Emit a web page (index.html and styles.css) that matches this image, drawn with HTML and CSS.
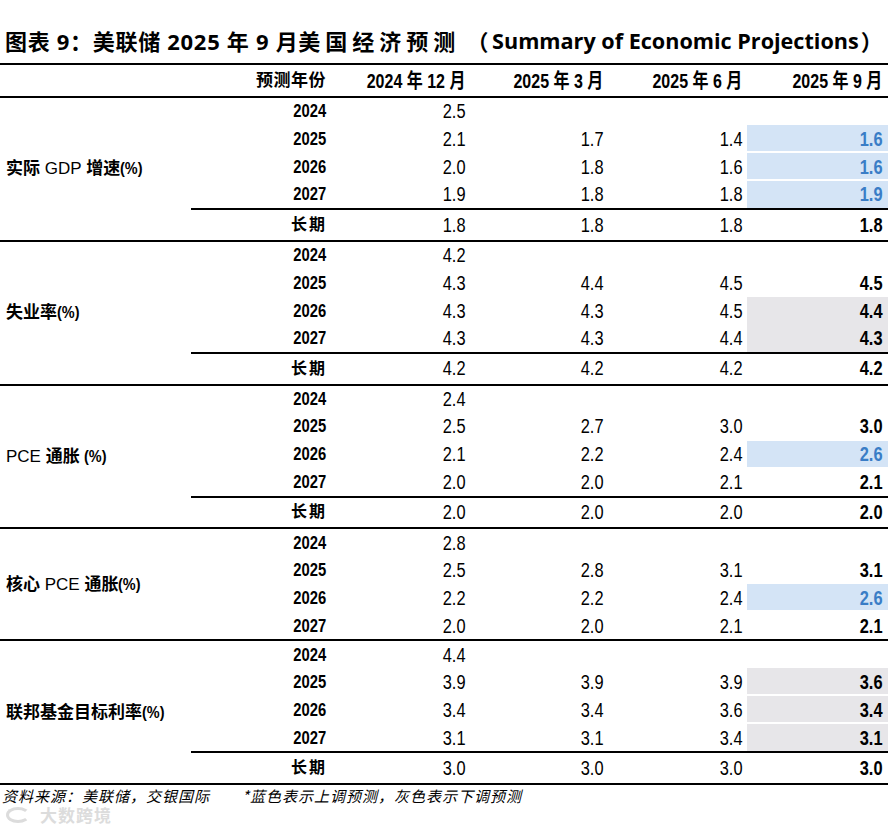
FILE: index.html
```html
<!DOCTYPE html>
<html lang="zh-CN">
<head>
<meta charset="utf-8">
<title>美联储 2025 年 9 月美国经济预测</title>
<link rel="stylesheet" href="styles.css">
</head>
<body>
<div class="page">
  <h1 class="title">图表 9：美联储 2025 年 9 月<span class="wide">美国经济预测</span><span class="paren">（</span><span class="en">Summary of Economic Projections</span><span class="paren-r">）</span></h1>
  <table class="sep">
    <colgroup>
      <col class="c-label"><col class="c-year"><col class="c-v1"><col class="c-v2"><col class="c-v3"><col class="c-v4">
    </colgroup>
    <thead>
      <tr>
        <th class="label"></th>
        <th class="yr-h">预测年份</th>
        <th class="v"><span class="n">2024 年 12 月</span></th>
        <th class="v"><span class="n">2025 年 3 月</span></th>
        <th class="v"><span class="n">2025 年 6 月</span></th>
        <th class="v last"><span class="n">2025 年 9 月</span></th>
      </tr>
    </thead>
    <tbody class="sec">
      <tr><td class="label" rowspan="5">实际 <span class="lat">GDP</span> 增速<span class="pct">(%)</span></td><td class="yr"><span class="n">2024</span></td><td class="v"><span class="n">2.5</span></td><td class="v"></td><td class="v"></td><td class="v last"></td></tr>
      <tr><td class="yr"><span class="n">2025</span></td><td class="v"><span class="n">2.1</span></td><td class="v"><span class="n">1.7</span></td><td class="v"><span class="n">1.4</span></td><td class="v last up gap"><span class="n">1.6</span></td></tr>
      <tr><td class="yr"><span class="n">2026</span></td><td class="v"><span class="n">2.0</span></td><td class="v"><span class="n">1.8</span></td><td class="v"><span class="n">1.6</span></td><td class="v last up gap"><span class="n">1.6</span></td></tr>
      <tr><td class="yr"><span class="n">2027</span></td><td class="v"><span class="n">1.9</span></td><td class="v"><span class="n">1.8</span></td><td class="v"><span class="n">1.8</span></td><td class="v last up"><span class="n">1.9</span></td></tr>
      <tr class="long"><td class="yr cjk">长期</td><td class="v"><span class="n">1.8</span></td><td class="v"><span class="n">1.8</span></td><td class="v"><span class="n">1.8</span></td><td class="v last"><span class="n">1.8</span></td></tr>
    </tbody>
    <tbody class="sec">
      <tr><td class="label" rowspan="5">失业率<span class="pct">(%)</span></td><td class="yr"><span class="n">2024</span></td><td class="v"><span class="n">4.2</span></td><td class="v"></td><td class="v"></td><td class="v last"></td></tr>
      <tr><td class="yr"><span class="n">2025</span></td><td class="v"><span class="n">4.3</span></td><td class="v"><span class="n">4.4</span></td><td class="v"><span class="n">4.5</span></td><td class="v last"><span class="n">4.5</span></td></tr>
      <tr><td class="yr"><span class="n">2026</span></td><td class="v"><span class="n">4.3</span></td><td class="v"><span class="n">4.3</span></td><td class="v"><span class="n">4.5</span></td><td class="v last down"><span class="n">4.4</span></td></tr>
      <tr><td class="yr"><span class="n">2027</span></td><td class="v"><span class="n">4.3</span></td><td class="v"><span class="n">4.3</span></td><td class="v"><span class="n">4.4</span></td><td class="v last down"><span class="n">4.3</span></td></tr>
      <tr class="long"><td class="yr cjk">长期</td><td class="v"><span class="n">4.2</span></td><td class="v"><span class="n">4.2</span></td><td class="v"><span class="n">4.2</span></td><td class="v last"><span class="n">4.2</span></td></tr>
    </tbody>
    <tbody class="sec">
      <tr><td class="label" rowspan="5"><span class="lat">PCE</span> 通胀 <span class="pct">(%)</span></td><td class="yr"><span class="n">2024</span></td><td class="v"><span class="n">2.4</span></td><td class="v"></td><td class="v"></td><td class="v last"></td></tr>
      <tr><td class="yr"><span class="n">2025</span></td><td class="v"><span class="n">2.5</span></td><td class="v"><span class="n">2.7</span></td><td class="v"><span class="n">3.0</span></td><td class="v last"><span class="n">3.0</span></td></tr>
      <tr><td class="yr"><span class="n">2026</span></td><td class="v"><span class="n">2.1</span></td><td class="v"><span class="n">2.2</span></td><td class="v"><span class="n">2.4</span></td><td class="v last up gap"><span class="n">2.6</span></td></tr>
      <tr><td class="yr"><span class="n">2027</span></td><td class="v"><span class="n">2.0</span></td><td class="v"><span class="n">2.0</span></td><td class="v"><span class="n">2.1</span></td><td class="v last"><span class="n">2.1</span></td></tr>
      <tr class="long"><td class="yr cjk">长期</td><td class="v"><span class="n">2.0</span></td><td class="v"><span class="n">2.0</span></td><td class="v"><span class="n">2.0</span></td><td class="v last"><span class="n">2.0</span></td></tr>
    </tbody>
    <tbody class="sec">
      <tr><td class="label" rowspan="4">核心 <span class="lat">PCE</span> 通胀<span class="pct">(%)</span></td><td class="yr"><span class="n">2024</span></td><td class="v"><span class="n">2.8</span></td><td class="v"></td><td class="v"></td><td class="v last"></td></tr>
      <tr><td class="yr"><span class="n">2025</span></td><td class="v"><span class="n">2.5</span></td><td class="v"><span class="n">2.8</span></td><td class="v"><span class="n">3.1</span></td><td class="v last"><span class="n">3.1</span></td></tr>
      <tr><td class="yr"><span class="n">2026</span></td><td class="v"><span class="n">2.2</span></td><td class="v"><span class="n">2.2</span></td><td class="v"><span class="n">2.4</span></td><td class="v last up gap"><span class="n">2.6</span></td></tr>
      <tr><td class="yr"><span class="n">2027</span></td><td class="v"><span class="n">2.0</span></td><td class="v"><span class="n">2.0</span></td><td class="v"><span class="n">2.1</span></td><td class="v last"><span class="n">2.1</span></td></tr>
    </tbody>
    <tbody class="sec">
      <tr><td class="label" rowspan="5">联邦基金目标利率<span class="pct">(%)</span></td><td class="yr"><span class="n">2024</span></td><td class="v"><span class="n">4.4</span></td><td class="v"></td><td class="v"></td><td class="v last"></td></tr>
      <tr><td class="yr"><span class="n">2025</span></td><td class="v"><span class="n">3.9</span></td><td class="v"><span class="n">3.9</span></td><td class="v"><span class="n">3.9</span></td><td class="v last down gap"><span class="n">3.6</span></td></tr>
      <tr><td class="yr"><span class="n">2026</span></td><td class="v"><span class="n">3.4</span></td><td class="v"><span class="n">3.4</span></td><td class="v"><span class="n">3.6</span></td><td class="v last down gap"><span class="n">3.4</span></td></tr>
      <tr><td class="yr"><span class="n">2027</span></td><td class="v"><span class="n">3.1</span></td><td class="v"><span class="n">3.1</span></td><td class="v"><span class="n">3.4</span></td><td class="v last down"><span class="n">3.1</span></td></tr>
      <tr class="long"><td class="yr cjk">长期</td><td class="v"><span class="n">3.0</span></td><td class="v"><span class="n">3.0</span></td><td class="v"><span class="n">3.0</span></td><td class="v last"><span class="n">3.0</span></td></tr>
    </tbody>
  </table>
  <p class="note">资料来源：美联储，交银国际　　*蓝色表示上调预测，灰色表示下调预测</p>
  <div class="watermark"><span class="wm-logo"></span>大数跨境</div>
</div>
</body>
</html>
```

FILE: styles.css
```css
* { box-sizing: border-box; }

body {
  margin: 0;
  background: #fff;
  color: #000;
}

.page {
  position: relative;
  width: 888px;
  height: 825px;
  overflow: hidden;
}

.title {
  margin: 0;
  height: 63px;
  padding: 19px 0 0 5px;
  display: flex;
  align-items: center;
  font: 700 22px "Open Sans", "Noto Sans CJK SC", sans-serif;
  line-height: 1;
  white-space: pre;
  letter-spacing: 0.7px;
}

.title .wide {
  letter-spacing: 5px;
}

.title .paren {
  margin-left: 6px;
  margin-right: 3px;
}

.title .en {
  font-size: 21.6px;
  letter-spacing: 0;
}

.title .paren-r {
  margin-left: 2px;
}

.sep {
  width: 888px;
  border-collapse: collapse;
  table-layout: fixed;
  font-family: "Liberation Sans", "Noto Sans CJK SC", sans-serif;
  line-height: 1;
}

.c-label { width: 191px; }
.c-year { width: 139px; }
.c-v1 { width: 140px; }
.c-v2 { width: 138px; }
.c-v3 { width: 139px; }
.c-v4 { width: 141px; }

.n {
  display: inline-block;
  transform: scaleX(0.8);
  transform-origin: right center;
  white-space: nowrap;
}

.sep thead tr {
  border-top: 2px solid #000;
  border-bottom: 2px solid #000;
}

.sep th {
  height: 33px;
  padding: 0 5px 0 0;
  font-size: 20px;
  font-weight: 700;
  text-align: right;
  white-space: nowrap;
  vertical-align: middle;
}

.sep th.yr-h {
  padding-right: 4px;
  font-size: 17px;
  letter-spacing: 0.5px;
}

.sep .sec {
  border-bottom: 2px solid #000;
}

.sep td {
  height: 28px;
  padding: 0 5px 0 0;
  text-align: right;
  white-space: nowrap;
  vertical-align: middle;
}

.sep .long td {
  height: 31.75px;
  border-top: 2px solid #000;
}

.sep td.label {
  text-align: left;
  padding: 0 0 0 6px;
  font-size: 17px;
  font-weight: 700;
  border-top: 0;
}

.sep td.label .lat {
  font-weight: 400;
}

.sep td.label .pct {
  display: inline-block;
  transform: scaleX(0.85);
  transform-origin: left center;
}

.sep td.yr {
  padding-right: 4px;
  font-size: 18.5px;
  font-weight: 700;
}

.sep td.yr.cjk {
  font-size: 16px;
  letter-spacing: 2px;
  padding-right: 3px;
}

.sep td.v {
  font-size: 20.5px;
  font-weight: 400;
}

.sep td.last,
.sep th.last {
  font-weight: 700;
  padding-right: 6px;
}

.sep td.up {
  background: #d4e4f6;
  color: #3a7dc6;
}

.sep td.down {
  background: #e7e6e9;
}

.sep td.gap {
  box-shadow: inset 0 -2px 0 #fff;
}

.note {
  margin: 0;
  padding: 1px 0 0 2px;
  font: italic 15px "Noto Sans CJK SC", sans-serif;
  line-height: 20px;
  letter-spacing: 1px;
  white-space: nowrap;
}

.watermark {
  position: absolute;
  left: 6px;
  top: 806px;
  display: flex;
  align-items: center;
  gap: 10px;
  font: 700 17px "Noto Sans CJK SC", sans-serif;
  line-height: 1;
  color: #dcdcdc;
  letter-spacing: 1px;
}

.wm-logo {
  width: 24px;
  height: 16px;
  border: 3px solid #dcdcdc;
  border-right-color: transparent;
  border-radius: 50%;
}
```
